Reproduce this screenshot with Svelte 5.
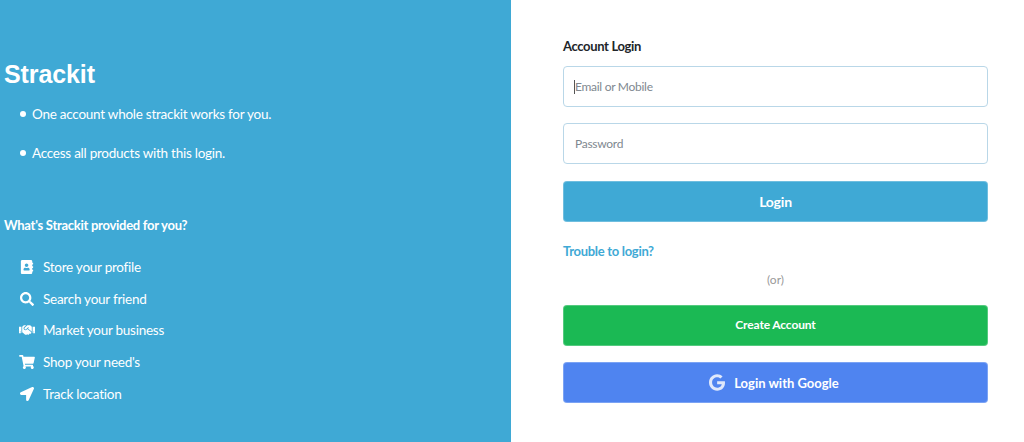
<script>
  const perks = ['One account whole strackit works for you.', 'Access all products with this login.'];

  const features = [
    { label: 'Store your profile', w: 14, vb: '0 0 448 512', d: 'M436 160c6.6 0 12-5.4 12-12v-40c0-6.6-5.4-12-12-12h-20V48c0-26.5-21.5-48-48-48H48C21.5 0 0 21.5 0 48v416c0 26.5 21.5 48 48 48h320c26.5 0 48-21.5 48-48v-48h20c6.6 0 12-5.4 12-12v-40c0-6.6-5.4-12-12-12h-20v-64h20c6.6 0 12-5.4 12-12v-40c0-6.6-5.4-12-12-12h-20v-64h20zm-228-32c35.3 0 64 28.7 64 64s-28.7 64-64 64-64-28.7-64-64 28.7-64 64-64zm112 236.8c0 10.6-10 19.2-22.4 19.2H118.4C106 384 96 375.4 96 364.8v-19.2c0-31.8 30.1-57.6 67.2-57.6h5c12.3 5.1 25.7 8 39.8 8s27.6-2.9 39.8-8h5c37.1 0 67.2 25.8 67.2 57.6v19.2z' },
    { label: 'Search your friend', w: 14, vb: '0 0 512 512', d: 'M505 442.7L405.3 343c-4.5-4.5-10.6-7-17-7H372c27.6-35.3 44-79.7 44-128C416 93.1 322.9 0 208 0S0 93.1 0 208s93.1 208 208 208c48.3 0 92.7-16.4 128-44v16.3c0 6.4 2.5 12.5 7 17l99.7 99.7c9.4 9.4 24.6 9.4 33.9 0l28.3-28.3c9.4-9.4 9.4-24.6.1-34zM208 336c-70.7 0-128-57.2-128-128 0-70.7 57.2-128 128-128 70.7 0 128 57.2 128 128 0 70.7-57.2 128-128 128z' },
    { label: 'Market your business', w: 18, vb: '0 0 640 512', d: 'M434.7 64h-85.9c-8 0-15.7 3-21.6 8.4l-98.3 90c-.1.1-.2.3-.3.4-16.6 15.6-16.3 40.5-2.1 56 12.7 13.9 39.4 17.6 56.1 2.7.1-.1.3-.1.4-.2l79.9-73.2c6.5-5.9 16.7-5.5 22.6 1 6 6.5 5.5 16.6-1 22.6l-26.1 23.9L504 313.8c2.9 2.4 5.5 5 7.9 7.7V128l-54.6-54.6c-5.9-6-14.1-9.4-22.6-9.4zM544 128.2v223.9c0 17.7 14.3 32 32 32h64V128.2h-96zm48 223.9c-8.8 0-16-7.2-16-16s7.2-16 16-16 16 7.2 16 16-7.2 16-16 16zM0 384h64c17.7 0 32-14.3 32-32V128.2H0V384zm48-63.9c8.8 0 16 7.2 16 16s-7.2 16-16 16-16-7.2-16-16c0-8.9 7.2-16 16-16zm435.9 18.6L334.6 217.5l-30 27.5c-29.7 27.1-75.2 24.5-101.7-4.4-26.9-29.4-24.8-74.9 4.4-101.7L289.1 64h-83.8c-8.5 0-16.6 3.4-22.6 9.4L128 128v223.9h18.3l90.5 81.9c27.4 22.3 67.7 18.1 90-9.3l.2-.2 17.9 15.5c15.9 13 39.4 10.5 52.3-5.4l31.4-38.6 5.4 4.4c13.7 11.1 33.9 9.1 45-4.7l9.5-11.7c11.2-13.8 9.1-33.9-4.6-45.1z' },
    { label: "Shop your need's", w: 16, vb: '0 0 576 512', d: 'M528.12 301.319l47.273-208C578.806 78.301 567.391 64 551.99 64H159.208l-9.166-44.81C147.758 8.021 137.93 0 126.529 0H24C10.745 0 0 10.745 0 24v16c0 13.255 10.745 24 24 24h69.883l70.248 343.435C147.325 417.1 136 435.222 136 456c0 30.928 25.072 56 56 56s56-25.072 56-56c0-15.674-6.447-29.835-16.824-40h209.647C430.447 426.165 424 440.326 424 456c0 30.928 25.072 56 56 56s56-25.072 56-56c0-22.172-12.888-41.332-31.579-50.405l5.517-24.276c3.413-15.018-8.002-29.319-23.403-29.319H218.117l-6.545-32h293.145c11.206 0 20.92-7.754 23.403-18.681z' },
    { label: 'Track location', w: 14, vb: '0 0 512 512', d: 'M444.52 3.52L28.74 195.42c-47.97 22.39-31.98 92.75 19.19 92.75h175.91v175.91c0 51.17 70.36 67.17 92.75 19.19l191.9-415.78c15.99-38.39-25.59-79.97-63.97-63.97z' }
  ];
</script>

<div class="page">
  <section class="intro">
    <h1>Strackit</h1>
    <ul class="perks">
      {#each perks as perk}
        <li>{perk}</li>
      {/each}
    </ul>
    <h2>What's Strackit provided for you?</h2>
    <ul class="features">
      {#each features as f}
        <li>
          <span class="icon">
            <svg width={f.w} height="14" viewBox={f.vb} fill="#fff"><path d={f.d} /></svg>
          </span>
          {f.label}
        </li>
      {/each}
    </ul>
  </section>

  <section class="login">
    <h3>Account Login</h3>
    <div class="field">
      <input type="text" placeholder="Email or Mobile" />
      <span class="caret"></span>
    </div>
    <div class="field second">
      <input type="password" placeholder="Password" />
    </div>
    <button class="btn primary">Login</button>
    <a class="trouble" href="#trouble">Trouble to login?</a>
    <div class="or">(or)</div>
    <button class="btn create">Create Account</button>
    <button class="btn google">
      <svg width="16" height="17" viewBox="0 0 488 512" fill="#dfe8fb"><path d="M488 261.8C488 403.3 391.1 504 248 504 110.8 504 0 393.2 0 256S110.8 8 248 8c66.8 0 123 24.5 166.3 64.9l-67.5 64.9C258.5 52.6 94.3 116.6 94.3 256c0 86.5 69.1 156.6 153.7 156.6 98.2 0 135-70.4 140.8-106.9H248v-85.3h236.1c2.3 12.7 3.9 24.9 3.9 41.4z" /></svg>
      Login with Google
    </button>
  </section>
</div>

<style>
  :global(body) {
    margin: 0;
    background: #fff;
  }

  .page {
    display: flex;
    height: 442px;
    overflow: hidden;
    font-family: Lato, "Liberation Sans", sans-serif;
  }

  .intro {
    flex: none;
    width: 507px;
    padding: 60px 0 0 4px;
    background: #3fa9d5;
    color: #fff;
  }

  h1 {
    margin: 0 0 16px;
    font: 700 25px/28px "Liberation Sans", Arial, sans-serif;
    letter-spacing: -0.1px;
  }

  .perks {
    list-style: none;
    margin: 0;
    padding: 0 0 0 16px;
    font-size: 13.5px;
    letter-spacing: -0.25px;
    line-height: 20px;
  }

  .perks li {
    display: flex;
    align-items: center;
    gap: 6px;
    margin-bottom: 19px;
  }

  .perks li::before {
    content: "";
    flex: none;
    width: 6px;
    height: 6px;
    border-radius: 50%;
    background: #fff;
  }

  h2 {
    margin: 53px 0 0;
    font-size: 13px;
    font-weight: 700;
    letter-spacing: -0.27px;
    line-height: 18px;
  }

  .features {
    list-style: none;
    margin: 17px 0 0;
    padding: 0 0 0 15px;
    font-size: 13.5px;
    letter-spacing: -0.25px;
  }

  .features li {
    display: flex;
    align-items: center;
    height: 31.7px;
  }

  .icon {
    flex: none;
    display: flex;
    justify-content: center;
    width: 16px;
    margin-right: 8px;
  }

  .login {
    flex: 1;
    display: flex;
    flex-direction: column;
    padding: 37px 36px 0 52px;
  }

  h3 {
    margin: 0 0 10px;
    font-size: 13px;
    font-weight: 700;
    letter-spacing: -0.35px;
    line-height: 19px;
    color: #212529;
  }

  .field {
    position: relative;
    margin-bottom: 16px;
  }

  .field.second {
    margin-bottom: 17px;
  }

  input {
    display: block;
    box-sizing: border-box;
    width: 100%;
    height: 41px;
    padding: 0 11px;
    border: 1px solid #b9d7e8;
    border-radius: 4px;
    font: 12px Lato, sans-serif;
    color: #495057;
    outline: none;
  }

  input::placeholder {
    color: #808890;
    letter-spacing: -0.28px;
    opacity: 1;
  }

  .caret {
    position: absolute;
    left: 11px;
    top: 14px;
    width: 1px;
    height: 14px;
    background: #555;
  }

  .btn {
    display: flex;
    align-items: center;
    justify-content: center;
    gap: 9px;
    height: 41px;
    padding: 0;
    border: 1px solid rgba(255, 255, 255, 0.25);
    border-radius: 4px;
    color: #fff;
    font-family: inherit;
    font-weight: 700;
  }

  .primary {
    background: #3fa9d5;
    font-size: 14px;
    letter-spacing: -0.2px;
  }

  .trouble {
    margin-top: 20px;
    font-size: 13px;
    font-weight: 700;
    letter-spacing: -0.3px;
    line-height: 18px;
    color: #3fa9d5;
    text-decoration: none;
  }

  .or {
    margin: 11px 0 16px;
    font-size: 12px;
    line-height: 18px;
    text-align: center;
    color: #9a9a9a;
  }

  .create {
    margin-bottom: 16px;
    padding-bottom: 2px;
    background: #1bb954;
    font-size: 12px;
    letter-spacing: -0.14px;
  }

  .google {
    padding-right: 3px;
    background: #4f84f0;
    font-size: 13px;
  }
</style>
